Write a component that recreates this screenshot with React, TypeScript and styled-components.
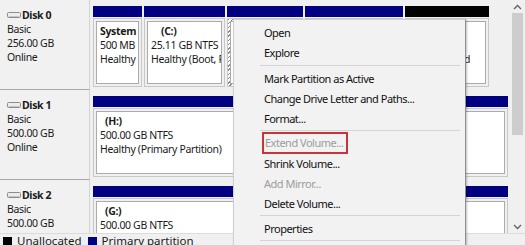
import React from "react";
import styled, { createGlobalStyle } from "styled-components";

const GlobalStyle = createGlobalStyle`
  html, body {
    margin: 0;
    padding: 0;
    background: #f0f0f0;
  }
  body {
    font-family: "Noto Sans", "Liberation Sans", sans-serif;
  }
`;

interface IPartition {
  width: number;
  title?: string;
  indent?: number;
  lines: string[];
  kind: "primary" | "unallocated";
  selected?: boolean;
}

interface IDisk {
  name: string;
  size: string;
  partitions: IPartition[];
}

const disks: IDisk[] = [
  {
    name: "Disk 0",
    size: "256.00 GB",
    partitions: [
      { width: 49, title: "System", lines: ["500 MB", "Healthy"], kind: "primary" },
      {
        width: 81,
        title: "(C:)",
        indent: 10,
        lines: ["25.11 GB NTFS", "Healthy (Boot, Page File)"],
        kind: "primary",
      },
      {
        width: 76,
        title: "(D:)",
        indent: 6,
        lines: ["60.00 GB NTFS", "Healthy (Primary)"],
        kind: "primary",
        selected: true,
      },
      {
        width: 98,
        title: "(E:)",
        indent: 6,
        lines: ["80.00 GB NTFS", "Healthy (Primary)"],
        kind: "primary",
      },
      {
        width: 84,
        lines: ["", "90.39 GB", "Unallocated"],
        kind: "unallocated",
      },
    ],
  },
  {
    name: "Disk 1",
    size: "500.00 GB",
    partitions: [
      {
        width: 415,
        title: "(H:)",
        indent: 5,
        lines: ["500.00 GB NTFS", "Healthy (Primary Partition)"],
        kind: "primary",
      },
    ],
  },
  {
    name: "Disk 2",
    size: "500.00 GB",
    partitions: [
      {
        width: 415,
        title: "(G:)",
        indent: 5,
        lines: ["500.00 GB NTFS", "Healthy (Primary Partition)"],
        kind: "primary",
      },
    ],
  },
];

type MenuEntry = { label: string; disabled?: boolean; marked?: boolean } | number;

// numbers are separators, the value is the height of the gap
const menu: MenuEntry[] = [
  { label: "Open" },
  { label: "Explore" },
  6,
  { label: "Mark Partition as Active" },
  { label: "Change Drive Letter and Paths..." },
  { label: "Format..." },
  5,
  { label: "Extend Volume...", disabled: true, marked: true },
  { label: "Shrink Volume..." },
  { label: "Add Mirror...", disabled: true },
  { label: "Delete Volume..." },
  5,
  { label: "Properties" },
  5,
  { label: "Help" },
];

const DiskIcon = () => (
  <svg width="14" height="7" viewBox="0 0 14 7">
    <rect x="0.5" y="0.5" width="13" height="5" rx="1" fill="#ececec" stroke="#8c8c8c" />
    <line x1="1.5" y1="4.5" x2="12.5" y2="4.5" stroke="#c4c4c4" />
  </svg>
);

const Chevron = ({ up }: { up?: boolean }) => (
  <svg width="9" height="6" viewBox="0 0 9 6">
    <path
      d={up ? "M1 5 L4.5 1.5 L8 5" : "M1 1 L4.5 4.5 L8 1"}
      fill="none"
      stroke="#606060"
      strokeWidth="1.3"
    />
  </svg>
);

const App = () => {
  return (
    <Screen>
      <GlobalStyle />
      <Main>
        <DiskList>
          {disks.map((disk) => (
            <DiskRow key={disk.name}>
              <DiskInfo>
                <DiskName>
                  <DiskIcon />
                  {disk.name}
                </DiskName>
                <div>Basic</div>
                <div>{disk.size}</div>
                <div>Online</div>
              </DiskInfo>
              <Partitions>
                {disk.partitions.map((p, i) => (
                  <Cell key={i} $w={p.width}>
                    <Header $kind={p.kind} />
                    <Frame $selected={!!p.selected}>
                      <Face $pad={p.kind === "unallocated" ? 6 : 3}>
                        {p.title && <Title $indent={p.indent || 0}>{p.title}</Title>}
                        {p.lines.map((line, j) => (
                          <Line key={j}>{line}</Line>
                        ))}
                      </Face>
                    </Frame>
                  </Cell>
                ))}
              </Partitions>
            </DiskRow>
          ))}
        </DiskList>
        <ScrollBar>
          <ArrowButton>
            <Chevron up />
          </ArrowButton>
          <Thumb />
          <Track />
          <ArrowButton>
            <Chevron />
          </ArrowButton>
        </ScrollBar>
      </Main>
      <Legend>
        <Swatch $color="#000" />
        <span>Unallocated</span>
        <Swatch $color="#000080" />
        <span>Primary partition</span>
      </Legend>
      <Menu>
        {menu.map((entry, i) =>
          typeof entry === "number" ? (
            <Separator key={i} $h={entry} />
          ) : (
            <MenuItem key={i} $disabled={!!entry.disabled}>
              {entry.marked ? <Marked>{entry.label}</Marked> : entry.label}
            </MenuItem>
          )
        )}
      </Menu>
    </Screen>
  );
};

export default App;

const Screen = styled.div`
  position: relative;
  width: 525px;
  height: 245px;
  overflow: hidden;
  background: #f0f0f0;
  display: flex;
  flex-direction: column;
  color: #000;
`;

const Main = styled.div`
  display: flex;
  height: 233px;
  flex-shrink: 0;
`;

const DiskList = styled.div`
  width: 510px;
  overflow: hidden;
`;

const DiskRow = styled.div`
  display: flex;
  height: 90px;
`;

const DiskInfo = styled.div`
  width: 90px;
  box-sizing: border-box;
  padding: 8px 0 0 7px;
  font-size: 10.5px;
  letter-spacing: -0.35px;
  line-height: 14px;
  color: #1a1a1a;
  border-bottom: 1px solid #a8a8a8;
  border-right: 1px solid #d4d4d4;
  background: #f1f1f1;
`;

const DiskName = styled.div`
  display: flex;
  align-items: center;
  gap: 1px;
  font-weight: bold;
  svg {
    margin-top: 1px;
  }
`;

const Partitions = styled.div`
  flex: 1;
  display: flex;
  gap: 2px;
  padding: 6px 0 3px 3px;
  box-sizing: border-box;
`;

const Cell = styled.div<{ $w: number }>`
  width: ${(p) => p.$w}px;
  flex-shrink: 0;
  display: flex;
  flex-direction: column;
`;

const Header = styled.div<{ $kind: string }>`
  height: 11px;
  background: ${(p) => (p.$kind === "unallocated" ? "#000" : "#000080")};
`;

const Frame = styled.div<{ $selected: boolean }>`
  flex: 1;
  display: flex;
  margin-top: 1px;
  padding: 2px;
  border: 1px solid #c8c8c8;
  background: ${(p) =>
    p.$selected
      ? "repeating-linear-gradient(135deg, #8a8a8a 0 1px, #ffffff 1px 3px)"
      : "#f0f0f0"};
  min-height: 0;
`;

const Face = styled.div<{ $pad: number }>`
  flex: 1;
  min-width: 0;
  background: #fff;
  border: 1px solid #ababab;
  padding: 2px 3px 2px ${(p) => p.$pad}px;
  font-size: 10.5px;
  letter-spacing: -0.35px;
  line-height: 14px;
  color: #1a1a1a;
  white-space: nowrap;
  overflow: hidden;
`;

const Title = styled.div<{ $indent: number }>`
  font-weight: bold;
  padding-left: ${(p) => p.$indent}px;
`;

const Line = styled.div`
  min-height: 14px;
`;

const ScrollBar = styled.div`
  width: 15px;
  display: flex;
  flex-direction: column;
  background: #f0f0f0;
`;

const ArrowButton = styled.div`
  height: 13px;
  display: flex;
  align-items: center;
  justify-content: center;
`;

const Thumb = styled.div`
  height: 122px;
  margin: 0 2px;
  background: #cdcdcd;
`;

const Track = styled.div`
  flex: 1;
`;

const Legend = styled.div`
  height: 12px;
  box-sizing: border-box;
  display: flex;
  align-items: center;
  gap: 5px;
  padding-left: 3px;
  border-top: 1px solid #dcdcdc;
  background: #f0f0f0;
  font-size: 11.5px;
  line-height: 12px;
  color: #1a1a1a;
  position: relative;
  z-index: 1;
  span {
    margin-right: 1px;
    margin-top: 2px;
  }
`;

const Swatch = styled.div<{ $color: string }>`
  width: 9px;
  height: 9px;
  background: ${(p) => p.$color};
  margin-top: 3px;
`;

const Menu = styled.div`
  position: absolute;
  left: 233px;
  top: 19px;
  width: 233px;
  height: 250px;
  box-sizing: border-box;
  padding: 2px 0;
  background: #f2f2f2;
  border: 1px solid #cfcfcf;
  border-right-color: #8f8f8f;
  box-shadow: 1px 1px 2px rgba(0, 0, 0, 0.25);
  z-index: 2;
`;

const MenuItem = styled.div<{ $disabled: boolean }>`
  height: 20px;
  display: flex;
  align-items: center;
  padding-left: 30px;
  font-size: 11px;
  letter-spacing: -0.5px;
  color: ${(p) => (p.$disabled ? "#9d9d9d" : "#111")};
  white-space: nowrap;
`;

const Marked = styled.span`
  display: inline-block;
  height: 22px;
  line-height: 18px;
  box-sizing: border-box;
  margin-left: -2px;
  padding: 0 2px 0 1px;
  border: 2px solid #c8343a;
`;

const Separator = styled.div<{ $h: number }>`
  height: ${(p) => p.$h}px;
  display: flex;
  align-items: center;
  &::after {
    content: "";
    flex: 1;
    height: 1px;
    margin: 0 5px 0 26px;
    background: #d5d5d5;
  }
`;
